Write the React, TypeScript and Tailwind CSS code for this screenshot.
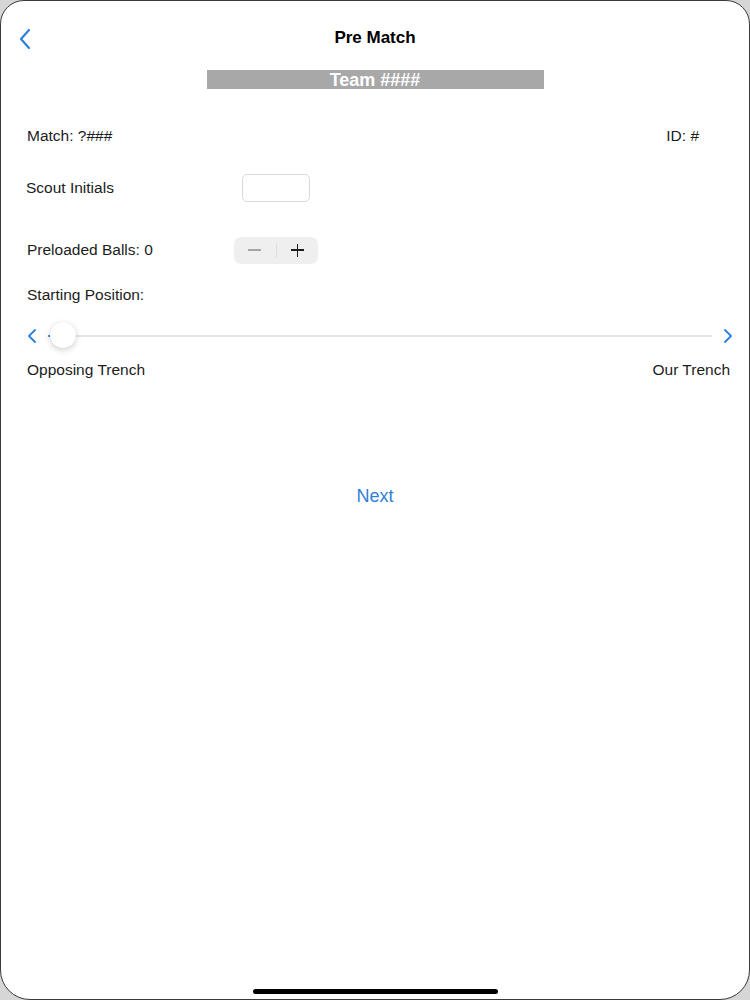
import React, { useState } from 'react';

const Chevron = ({ dir }: { dir: 'left' | 'right' }) => (
  <svg width="12" height="16" viewBox="0 0 12 16" fill="none">
    <path
      d={dir === 'left' ? 'M9 2 L3 8 L9 14' : 'M3 2 L9 8 L3 14'}
      stroke="#2f80d8"
      strokeWidth="1.8"
      strokeLinecap="round"
      strokeLinejoin="round"
    />
  </svg>
);

export default function App() {
  const [balls, setBalls] = useState(0);

  return (
    <div className="w-[750px] h-[1000px] bg-[#d6d6d6]" style={{ fontFamily: '"Liberation Sans", Arial, sans-serif' }}>
      <div className="w-full h-full bg-white rounded-t-[24px] rounded-b-[30px] border border-[#3a3a3a] flex flex-col text-[#1c1c1c] overflow-hidden">
        {/* header */}
        <div className="relative h-[69px] pt-[26px] flex justify-center">
          <button className="absolute left-[16px] top-[27px]">
            <svg width="16" height="22" viewBox="0 0 16 22" fill="none">
              <path d="M12 2 L4 11 L12 20" stroke="#2f80d8" strokeWidth="2.2" strokeLinecap="round" strokeLinejoin="round" />
            </svg>
          </button>
          <span className="text-[17px] font-bold leading-[22px] text-black">Pre Match</span>
        </div>

        <div className="flex justify-center">
          <div className="w-[337px] h-[19px] bg-[#a8a8a8] flex items-center justify-center text-white text-[18px] font-bold leading-none">
            Team ####
          </div>
        </div>

        <div className="mt-[32px] h-[30px] pl-[26px] pr-[50px] flex items-center justify-between text-[15.5px]">
          <span>Match: ?###</span>
          <span>ID: #</span>
        </div>

        <div className="mt-[22px] h-[30px] pl-[25px] flex items-center text-[15.5px]">
          <span className="w-[216px]">Scout Initials</span>
          <input className="w-[68px] h-[28px] rounded-[5px] border border-[#d9d9d9] outline-none px-1" />
        </div>

        <div className="mt-[32px] h-[30px] pl-[26px] flex items-center text-[15.5px]">
          <span className="w-[207px]">Preloaded Balls: {balls}</span>
          <div className="w-[84px] h-[27px] rounded-[7px] bg-[#efeff0] flex items-center">
            <button className="flex-1 h-full flex items-center justify-center" onClick={() => setBalls(Math.max(0, balls - 1))}>
              <span className="w-[13px] h-[1.5px] bg-[#a5a5a5]" />
            </button>
            <span className="w-px h-[15px] bg-[#dedede]" />
            <button className="flex-1 h-full flex items-center justify-center relative" onClick={() => setBalls(balls + 1)}>
              <span className="w-[13px] h-[1.5px] bg-[#1c1c1c]" />
              <span className="absolute w-[1.5px] h-[13px] bg-[#1c1c1c]" />
            </button>
          </div>
        </div>

        <div className="mt-[20px] h-[20px] pl-[26px] flex items-center text-[15.5px]">Starting Position:</div>

        <div className="mt-[17px] h-[28px] pl-[25px] pr-[15px] flex items-center">
          <Chevron dir="left" />
          <div className="relative flex-1 h-[2px] bg-[#e6e6e6] mx-[10px]">
            <div className="absolute left-0 top-0 h-[2px] w-[6px] bg-[#2f80d8] rounded-full" />
            <div className="absolute left-[2px] top-[-13px] w-[26px] h-[26px] rounded-full bg-white shadow-[0_2px_6px_rgba(0,0,0,0.18),0_0_1px_rgba(0,0,0,0.1)]" />
          </div>
          <Chevron dir="right" />
        </div>

        <div className="mt-[10px] h-[20px] pl-[26px] pr-[19px] flex items-center justify-between text-[15.5px]">
          <span>Opposing Trench</span>
          <span>Our Trench</span>
        </div>

        <div className="mt-[104px] h-[24px] flex justify-center">
          <button className="text-[18px] text-[#2f80d8] leading-[24px]">Next</button>
        </div>

        <div className="mt-auto pb-[5px] flex justify-center">
          <div className="w-[245px] h-[5px] rounded-full bg-black" />
        </div>
      </div>
    </div>
  );
}
